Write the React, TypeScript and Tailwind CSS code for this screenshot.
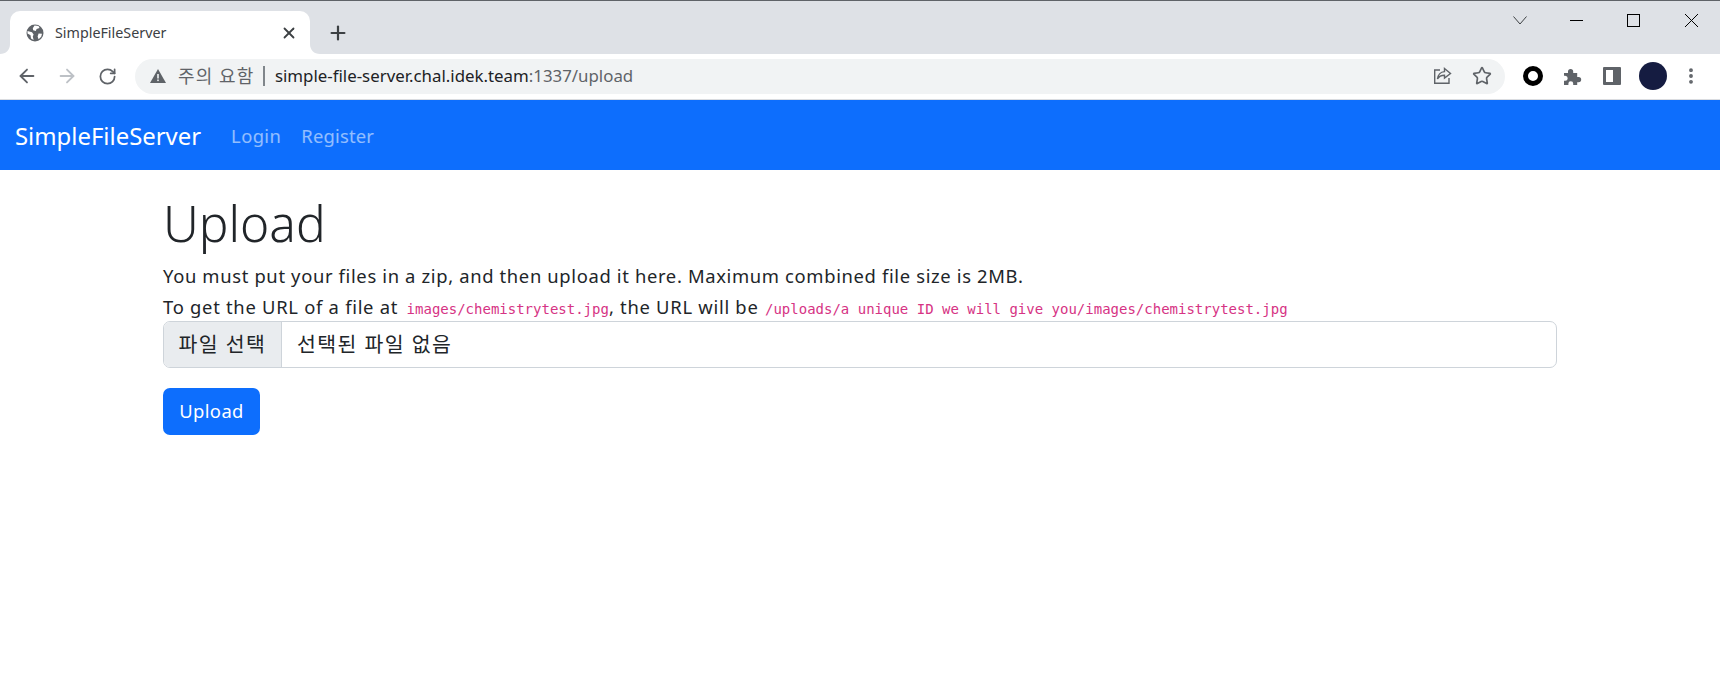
import React from "react";
import { ArrowLeft, ArrowRight, RotateCw, Star, Plus, X, EllipsisVertical } from "lucide-react";

const sans = "font-['Noto_Sans','Noto_Sans_CJK_KR',sans-serif]";

const Globe = () => (
  <svg width="18" height="18" viewBox="0 0 18 18">
    <circle cx="9" cy="9" r="8.5" fill="#5f6368" />
    <path d="M1.5 7l4.5 1.2 1.6 2.3-.8 2 .8 3.4L5 14.5l-.5-3.2L1.5 9.5zM8.5 1.5l4 .6 1 2-2.9 1-.8 1.8-2.6-.6-.4-2zM12.6 9.6l3.4.2-.8 3-2.6 2.4-1-2.6z" fill="#fff" />
  </svg>
);

const Share = () => (
  <svg width="20" height="20" viewBox="0 0 20 20" fill="none" stroke="#5f6368" strokeWidth="1.4">
    <path d="M8 4H2.7v13.3H17V12" />
    <path d="M12.5 2.5L18.5 7.5L12.5 12V9.3C9.5 9.3 7 10.3 5.5 13C5.8 9 8.5 5.9 12.5 5.6Z" />
  </svg>
);

const ExtensionPuzzle = () => (
  <svg width="19" height="19" viewBox="0 0 19 19" className="ml-[20px]">
    <path d="M1 6h4V4.5a2.6 2.6 0 0 1 5.2 0V6h4v4h1.4a2.6 2.6 0 0 1 0 5.2h-1.4V18h-4v-1.4a2.4 2.4 0 0 0-4.8 0V18H1v-4.2h1.2a2.5 2.5 0 0 0 0-5H1z" fill="#5f6368" />
  </svg>
);

const WindowControls = () => (
  <div className="mb-auto ml-auto flex h-[38px] items-center pr-[22px]">
    <svg width="14" height="9" viewBox="0 0 14 9" fill="none" stroke="#3c4043"><path d="M.5.5L7 8L13.5.5" /></svg>
    <svg width="13" height="13" viewBox="0 0 13 13" className="ml-[43px]" stroke="#000"><path d="M0 6.5H13" /></svg>
    <svg width="13" height="13" viewBox="0 0 13 13" fill="none" className="ml-[44px]" stroke="#000"><rect x=".5" y=".5" width="12" height="12" /></svg>
    <svg width="13" height="13" viewBox="0 0 13 13" className="ml-[45px]" stroke="#000"><path d="M0 0L13 13M13 0L0 13" /></svg>
  </div>
);

const App: React.FC = () => {
  return (
    <div className={`min-h-[681px] bg-white ${sans}`}>
      {/* Browser chrome */}
      <div className="flex h-[54px] items-end border-t border-[#5f6368] bg-[#dee1e6]">
        <div className="relative ml-[10px] flex h-[43px] w-[300px] items-center rounded-t-[10px] bg-white pl-4 pr-3">
          <svg className="absolute -left-[10px] bottom-0" width="10" height="10" viewBox="0 0 10 10"><path d="M0 10C6 10 10 6 10 0V10Z" fill="#fff" /></svg>
          <svg className="absolute -right-[10px] bottom-0" width="10" height="10" viewBox="0 0 10 10"><path d="M10 10C4 10 0 6 0 0V10Z" fill="#fff" /></svg>
          <Globe />
          <span className="ml-[11px] flex-1 text-[14.3px] text-[#3c4043]">SimpleFileServer</span>
          <X size={18} strokeWidth={2.4} className="text-[#3c4043]" />
        </div>
        <div className="ml-[17px] flex h-[43px] items-center">
          <Plus size={22} strokeWidth={2.4} className="text-[#3c4043]" />
        </div>
        <WindowControls />
      </div>
      <div className="flex h-[46px] items-center border-b border-[#dadce0] bg-white pb-px">
        <div className="ml-[16px] flex items-center gap-[18px] text-[#5f6368]">
          <ArrowLeft size={22} strokeWidth={2} />
          <ArrowRight size={22} strokeWidth={2} className="text-[#bdc1c6]" />
          <RotateCw size={19} strokeWidth={2.2} className="ml-[2px]" />
        </div>
        <div className="ml-[18px] flex h-[35px] w-[1370px] items-center rounded-full bg-[#f1f3f4] pl-[15px] pr-[13px]">
          <svg width="16" height="14" viewBox="0 0 16 14"><path d="M8 0L16 14H0Z" fill="#5f6368" /><rect x="7.2" y="5" width="1.6" height="4.5" fill="#f1f3f4" /><rect x="7.2" y="10.5" width="1.6" height="1.6" fill="#f1f3f4" /></svg>
          <span className="ml-[12px] text-[18px] tracking-[1.1px] text-[#5f6368]">주의 요함</span>
          <span className="ml-[9px] mr-[10px] h-[20px] w-[1.5px] bg-[#80868b]" />
          <span className="text-[16.85px] text-[#202124]">simple-file-server.chal.idek.team<span className="text-[#5f6368]">:1337/upload</span></span>
          <div className="ml-auto flex items-center gap-[20px] text-[#5f6368]">
            <Share />
            <Star size={20} strokeWidth={2} />
          </div>
        </div>
        <div className="ml-[18px] flex items-center">
          <div className="size-[20px] rounded-full border-[5px] border-black bg-white" />
          <ExtensionPuzzle />
          <div className="ml-[21px] flex h-[18px] w-[18px] rounded-[1px] border-[3px] border-r-[8px] border-[#5f6368] bg-white" />
          <div className="ml-[18px] size-[28px] rounded-full bg-[#151c41]" />
          <EllipsisVertical size={20} strokeWidth={2.6} className="ml-[14px] text-[#5f6368]" />
        </div>
      </div>

      {/* Navbar */}
      <nav className="flex h-[70px] items-center bg-[#0d6efd] pt-px pl-[15px]">
        <span className="text-[23.9px] text-white">SimpleFileServer</span>
        <span className="ml-[30px] text-[18.4px] tracking-[0.4px] text-white/55">Login</span>
        <span className="ml-[20px] text-[18.4px] tracking-[0.2px] text-white/55">Register</span>
      </nav>

      {/* Upload form */}
      <main className="mx-auto w-[1394px] text-[#212529]">
        <h1 className="mt-[21px] text-[49.6px] font-light leading-[64px]">Upload</h1>
        <p className="mt-[6px] text-[18.4px] leading-[30px] tracking-[0.65px]">You must put your files in a zip, and then upload it here. Maximum combined file size is 2MB.</p>
        <p className="mt-px h-[29px] text-[18.4px] leading-[30px] tracking-[0.72px]">
          To get the URL of a file at <code className="ml-[3px] font-['DejaVu_Sans_Mono',monospace] text-[14px] tracking-normal text-[#d63384]">images/chemistrytest.jpg</code>, the URL will be <code className="ml-[1px] font-['DejaVu_Sans_Mono',monospace] text-[14px] tracking-normal text-[#d63384]">/uploads/a unique ID we will give you/images/chemistrytest.jpg</code>
        </p>
        <div className="flex h-[47px] items-center overflow-hidden rounded-[7px] border border-[#ced4da] text-[20.5px] tracking-[1.4px]">
          <span className="flex h-full w-[118px] items-center justify-center border-r border-[#ced4da] bg-[#e9ecef]">파일 선택</span>
          <span className="ml-[15px]">선택된 파일 없음</span>
        </div>
        <button className="mt-[20px] h-[47px] w-[97px] rounded-[7px] bg-[#0d6efd] pb-px text-[18.4px] tracking-[0.4px] text-white">Upload</button>
      </main>
    </div>
  );
};

export default App;
